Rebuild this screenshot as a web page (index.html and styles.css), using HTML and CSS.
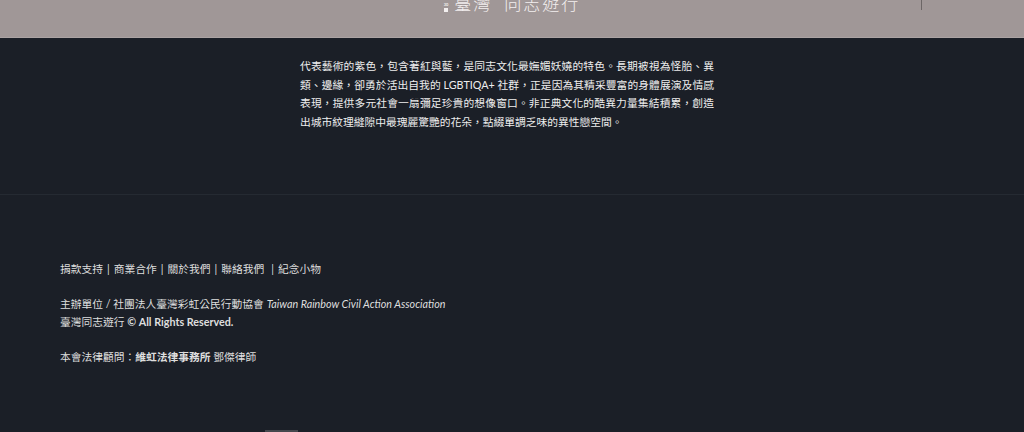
FILE: index.html
```html
<!DOCTYPE html>
<html lang="zh-Hant">
<head>
<meta charset="utf-8">
<title>臺灣同志遊行</title>
<link rel="stylesheet" href="styles.css">
</head>
<body>
<header class="topbar">
  <div class="brand">
    <span class="logo"><span class="logo-num">30</span><span class="logo-box"></span></span>
    <span class="brand-a">臺灣</span>
    <span class="brand-b">同志遊行</span>
  </div>
  <span class="topbar-rule"></span>
</header>

<section class="intro">
  <p class="intro-text">代表藝術的紫色，包含著紅與藍，是同志文化最嫵媚妖嬈的特色。長期被視為怪胎、異類、邊緣，卻勇於活出自我的 LGBTIQA+ 社群，正是因為其精采豐富的身體展演及情感表現，提供多元社會一扇彌足珍貴的想像窗口。非正典文化的酷異力量集結積累，創造出城市紋理縫隙中最瑰麗驚艷的花朵，點綴單調乏味的異性戀空間。</p>
</section>

<footer class="footer">
  <nav class="footer-links"><a href="#">捐款支持</a><span class="sep">|</span><a href="#">商業合作</a><span class="sep">|</span><a href="#">關於我們</a><span class="sep">|</span><a href="#">聯絡我們</a><span class="sep sep-wide">|</span><a href="#">紀念小物</a></nav>
  <p class="footer-info">主辦單位 / 社團法人臺灣彩虹公民行動協會 <em>Taiwan Rainbow Civil Action Association</em><br>臺灣同志遊行 <strong>© All Rights Reserved.</strong></p>
  <p class="footer-info footer-legal">本會法律顧問：<strong>維虹法律事務所</strong> 鄧傑律師</p>
</footer>
<div class="to-top"></div>
</body>
</html>
```

FILE: styles.css
```css
html, body {
  margin: 0;
  padding: 0;
}
body {
  position: relative;
  background: #1b1f27;
  font-family: Lato, "Noto Sans CJK TC", sans-serif;
  color: #e2e2e2;
  height: 432px;
  overflow: hidden;
}
.topbar {
  position: relative;
  height: 37px;
  background: #a09797;
  border-bottom: 1px solid #aba3a3;
  overflow: hidden;
}
.brand {
  display: flex;
  justify-content: center;
  align-items: center;
  gap: 12px;
  margin-top: -8px;
  color: #f3efef;
  font-family: "Noto Sans CJK TC", sans-serif;
  font-weight: 300;
  font-size: 17px;
  line-height: 22px;
  letter-spacing: 2px;
}
.logo {
  display: flex;
  flex-direction: column;
  align-items: center;
  margin-top: 8px;
  margin-right: -6px;
}
.logo-num {
  font-size: 4px;
  line-height: 4px;
  letter-spacing: 0;
  font-family: Lato, sans-serif;
  font-weight: 700;
}
.logo-box {
  width: 4px;
  height: 4px;
  margin-top: 1px;
  background: #f3efef;
}
.topbar-rule {
  position: absolute;
  left: 921px;
  top: 0;
  width: 1px;
  height: 10px;
  background: #6c6666;
}
.intro {
  border-bottom: 1px solid #252a32;
  height: 157px;
  box-sizing: border-box;
  padding-top: 19px;
}
.intro-text {
  width: 414px;
  margin: 0 0 0 300px;
  font-size: 10.75px;
  line-height: 18.67px;
  text-align: justify;
  color: #eeeeee;
}
.footer {
  padding: 65px 60px 0;
  font-size: 10.75px;
  line-height: 18.67px;
  color: #dedede;
}
.footer a {
  color: #dedede;
  text-decoration: none;
}
.footer-links {
  margin: 0 0 16px;
}
.sep {
  margin: 0 4px;
}
.sep-wide {
  margin-left: 7px;
}
.footer-info {
  margin: 0 0 16px;
}
.footer-info em {
  font-style: italic;
}
.footer-info strong {
  font-weight: 700;
}
.to-top {
  position: absolute;
  left: 265px;
  bottom: 0;
  width: 33px;
  height: 2px;
  background: #45484e;
}
```
